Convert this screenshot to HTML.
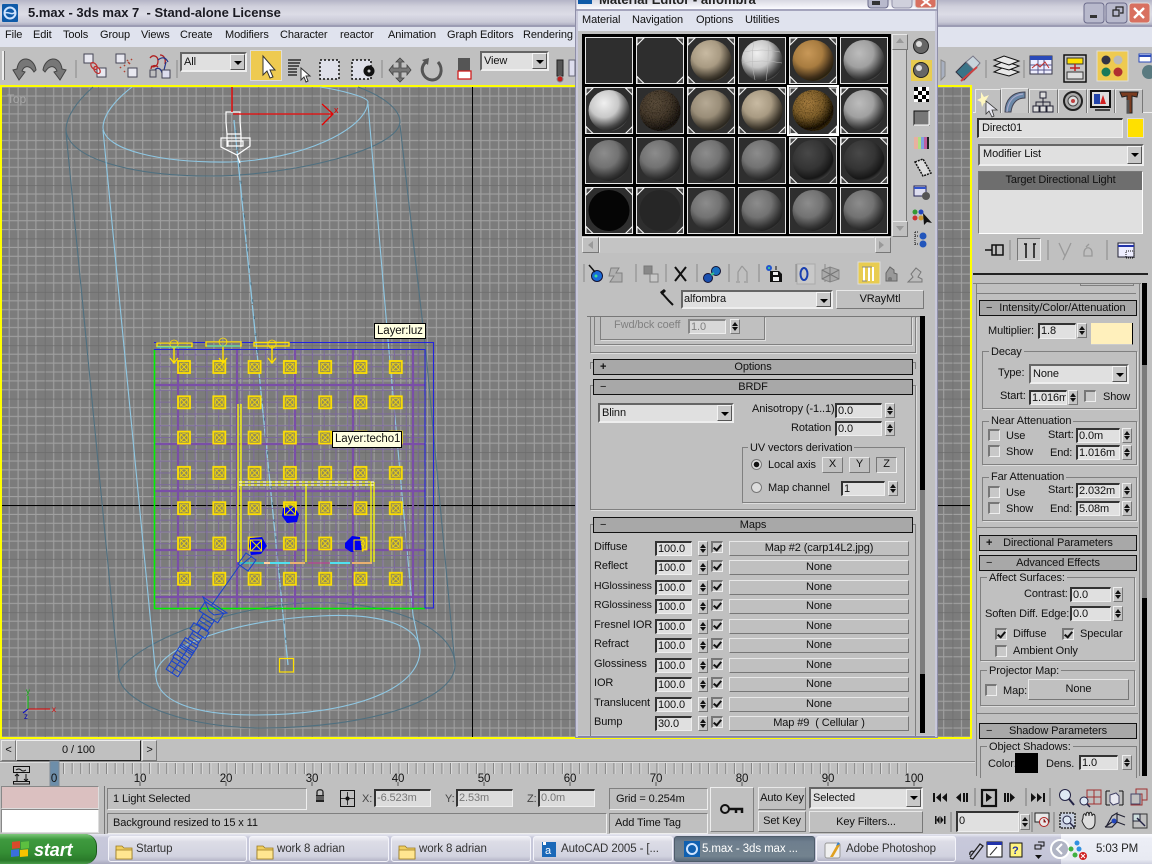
<!DOCTYPE html>
<html><head><meta charset="utf-8"><title>5.max - 3ds max 7</title>
<style>
html,body{margin:0;padding:0;width:1152px;height:864px;overflow:hidden;background:#c0c0c0}
body{position:relative;font:11px/14px "Liberation Sans",sans-serif;letter-spacing:-.1px;color:#111}
svg{position:absolute;left:0;top:0}
svg text{font-family:"Liberation Sans",sans-serif}
div,p,i,b{position:absolute;box-sizing:border-box}
p{margin:0;white-space:pre}
.f{background:#e0e0e0;border:1px solid;border-color:#333 #eee #eee #333;border-width:2px 1px 1px 2px;padding-left:1px;height:15px;line-height:12px;overflow:hidden;white-space:pre;color:#111}
.s{width:10px;height:15px;background:#c4c4c4;border:1px solid;border-color:#eee #777 #777 #eee}
.s:before,.s:after{content:"";position:absolute;left:1px;border-left:3px solid transparent;border-right:3px solid transparent}
.s:before{top:2px;border-bottom:4px solid #111}
.s:after{bottom:2px;border-top:4px solid #111}
.b{background:#c0c0c0;border:1px solid;border-color:#e8e8e8 #777 #777 #e8e8e8;text-align:center;white-space:pre;overflow:hidden}
.h{background:#a8a8a8;border:1px solid #111;height:15px;text-align:center;line-height:12px;white-space:pre}
.g{border:1px solid #808080;box-shadow:1px 1px 0 #ddd}
.gl{background:#c0c0c0;padding:0 2px}
.d{background:#e0e0e0;border:1px solid;border-color:#666 #eee #eee #666;border-width:2px 2px 2px 2px;padding-left:2px;white-space:pre;line-height:16px}
.d i{right:0;top:0;bottom:0;width:15px;background:#c8c8c8;border:1px solid;border-color:#f4f4f4 #555 #555 #f4f4f4}
.d i:after{content:"";position:absolute;left:3px;top:6px;border-left:4px solid transparent;border-right:4px solid transparent;border-top:4px solid #000}
.c{width:12px;height:12px;background:#c8c8c8;border:1px solid;border-color:#777 #eee #eee #777;border-width:2px 1px 1px 2px}
.k:after{content:"";position:absolute;left:2px;top:0;width:3px;height:6px;border:solid #111;border-width:0 2px 2px 0;transform:rotate(40deg)}
.tb{top:836px;height:26px;border-radius:3px;background:linear-gradient(#f0f0f6,#dcdce6 20%,#d2d3e0 80%,#b4b5c8);border:1px solid #f4f4fa;line-height:24px;padding-left:27px;white-space:pre;color:#333;overflow:hidden;font-size:11.5px}
</style></head><body>

<!-- viewport -->
<svg width="1152" height="864" viewBox="0 0 1152 864">
<defs>
<pattern id="gr" patternUnits="userSpaceOnUse" x="472" y="505.5" width="53.4" height="53.4">
<rect width="53.4" height="53.4" fill="#7c7c7c"/>
<g stroke="#a0a0a0" stroke-width="1.1">
<path d="M8.9 0V53.4M17.8 0V53.4M26.7 0V53.4M35.6 0V53.4M44.5 0V53.4M0 8.9H53.4M0 17.8H53.4M0 26.7H53.4M0 35.6H53.4M0 44.5H53.4"/></g>
<path d="M0 0V53.4M0 0H53.4" stroke="#6c6c6c" stroke-width="1.4"/>
</pattern>
<pattern id="pg" patternUnits="userSpaceOnUse" x="155" y="349" width="11.73" height="11.8">
<path d="M5 0V11.8M0 6H11.73" stroke="#7c68a0" stroke-width=".9"/>
</pattern>
<pattern id="ys" patternUnits="userSpaceOnUse" x="177" y="360" width="35.3" height="35.3">
<rect x="1" y="1" width="12" height="12" fill="#8f8a5a" stroke="#ffe000" stroke-width="1.8"/>
<circle cx="7" cy="7" r="4" fill="none" stroke="#ffe000" stroke-width=".8"/>
<path d="M3 3L11 11M11 3L3 11" stroke="#ffe000" stroke-width=".8"/>
</pattern>
</defs>
<rect x="0" y="85" width="972" height="654" fill="#ffff00"/>
<rect x="2" y="87" width="968" height="650" fill="url(#gr)"/>
<path d="M472.5 87V737M2 505.5H970" stroke="#000" stroke-width="1"/>
<text x="7" y="103" font-size="12" fill="#a8a8a8">Top</text>

<g fill="none" stroke-width="1.1">
<g stroke="#4f7080">
<path d="M93 87C75 103 66 118 66 130C68 158 130 176 210 176C290 176 398 150 400 122C400 108 380 95 358 87"/>
<path d="M66 132L119 678M400 125L426 353L455 665"/>
<path d="M119 678C112 660 190 615 290 604C380 596 455 625 455 665C455 700 370 728 262 728C190 728 125 705 119 678Z"/>
</g>
<g stroke="#8fc8e4">
<path d="M132 87C115 100 103 115 103 128C105 150 160 163 230 162C300 160 366 130 368 102C368 97 340 90 320 87"/>
<path d="M103 130L156 677M368 104L388 340L413 615L420 650"/>
<path d="M156 677C152 650 230 620 320 616C390 612 420 630 420 650C420 690 350 715 255 715C190 715 158 700 156 677Z"/>
<path d="M234 120L288 665" stroke-dasharray="30 1" stroke-width="1.3"/>
<path d="M236 130L286 640" stroke="#4f7080" stroke-dasharray="3 14"/>
</g>
</g>

<!-- interior -->
<rect x="155" y="349" width="270" height="259" fill="url(#pg)"/>
<path d="M155 385H425M155 444H425M155 491H425M155 550H425M155 597H425M178 349V608M237 349V608M295 349V608M353 349V608M413 349V608" stroke="#7a4ea8" stroke-width="2.2"/>
<path d="M154.5 349V608.5H425" fill="none" stroke="#00f000" stroke-width="1.6"/>
<path d="M154 342.5H433.5V608H425V349.5H154" fill="none" stroke="#2222e0" stroke-width="1.1"/>
<rect x="177" y="360" width="247.1" height="247.1" fill="url(#ys)"/>
<g fill="none" stroke="#ffe000" stroke-width="1.4">
<rect x="157" y="343" width="35" height="3.5"/><rect x="206" y="342" width="35" height="4"/><rect x="254" y="342.5" width="35" height="3.5"/>
<path d="M174 346V362M170 358L174 363L178 358M223 346V362M219 358L223 363L227 358M272 346V362M268 358L272 363L276 358"/>
<circle cx="174" cy="344" r="4" stroke-width=".8"/><circle cx="223" cy="342" r="4" stroke-width=".8"/><circle cx="272" cy="344" r="4" stroke-width=".8"/>
</g>
<g fill="none" stroke="#ffff00" stroke-width="1.3">
<path d="M238 404V562M241 404V562M239 482H374M239 485H374M371 482V562M374 482V562M306 484V562"/>
</g>
<path d="M239 482H374M239 485H374" fill="none" stroke="#fff" stroke-width="1" stroke-dasharray="3 3"/>
<path d="M157 347H191M207 346H240" stroke="#2ce0e0" stroke-width="1"/>
<path d="M240 563H264" stroke="#30d0d0" stroke-width="1.5"/><path d="M264 563H283" stroke="#ffd0a0" stroke-width="2"/><path d="M270 563H290" stroke="#50e0f0" stroke-width="2"/><path d="M290 563H305" stroke="#e8b070" stroke-width="2"/><path d="M308 563H330" stroke="#cc3399" stroke-width="1"/><path d="M330 563H350" stroke="#50e0f0" stroke-width="2"/><path d="M352 563H372" stroke="#e8b070" stroke-width="2"/>
<g fill="#0000f0">
<path d="M283 508L293 506L299 514L297 522L287 523L282 516Z"/>
<path d="M250 538L262 537L267 546L261 554L251 555L249 546Z"/>
<path d="M345 543L352 536L360 537L362 552L351 552L345 548Z"/>
</g>
<g fill="none" stroke="#ffe000" stroke-width="1"><rect x="284.500" y="504" width="11" height="11"/><path d="M285 504L296 515M296 504L285 515" stroke="#e0e000"/><rect x="250.500" y="540" width="11" height="11"/><path d="M251 540L262 551M262 540L251 551" stroke="#e0e000"/><rect x="354" y="540" width="9" height="11"/></g>

<!-- blue light -->
<g fill="none" stroke="#1540d0" stroke-width="1">
<g transform="translate(172,673) rotate(-57)">
<rect x="0" y="-7" width="14" height="14"/><rect x="14" y="-8" width="14" height="15"/><rect x="28" y="-8" width="9" height="15"/><path d="M5 -7V7M10 -7V7M18 -8V7M22 -8V7M26 -8V7M30 -8V7M34 -8V7M14 0H37M0 0H14"/>
<rect x="37" y="-5" width="10" height="11"/><rect x="47" y="-9" width="7" height="18"/><path d="M40 -5V6M44 -5V6M47 0H54"/>
<rect x="55" y="-6" width="12" height="13"/><path d="M59 -6V7M63 -6V7M67 -11L78 -11L78 11L67 11Z"/>
</g>
<path d="M203 597L227 613L214 615L209 611Z"/><path d="M211 606L240 565M246 553L256 560L248 571L238 564Z"/><path d="M240 566L252 556"/>
</g>
<rect x="279.500" y="658.500" width="14" height="13.500" fill="none" stroke="#ffe000" stroke-width="1.2"/>

<!-- white light + gizmo -->
<g fill="none" stroke="#fff" stroke-width="1.2">
<path d="M226 112H240V121L241 134H227L226 122ZM227 134L227 147M241 134V147M221 138H250V146L237 155L221 147ZM228 141H243V146H228ZM237 155L240 163"/>
</g>
<path d="M232 87V112" stroke="#e00000" stroke-width="1.4"/>
<path d="M233 114H332M322 104L333 114L322 125" fill="none" stroke="#e60000" stroke-width="1.3"/>
<text x="334" y="113" font-size="9" fill="#e00000">x</text>

<!-- axis -->
<path d="M28 709H50" stroke="#e00000" stroke-width="1"/><path d="M28 709V696" stroke="#00c000" stroke-width="1"/>
<path d="M28 709L23 713" stroke="#0000d0" stroke-width="1"/>
<text x="52" y="712" font-size="8" fill="#d00">x</text><text x="26" y="694" font-size="8" fill="#0a0">y</text><text x="24" y="719" font-size="8" fill="#00a">z</text>
</svg>

<div style="left:374px;top:323px;width:52px;height:16px;background:#ffffe1;border:1px solid #000;line-height:14px;padding-left:2px;font-size:11.5px">Layer:luz</div>
<div style="left:332px;top:431px;width:70px;height:17px;background:#ffffe1;border:1px solid #000;line-height:15px;padding-left:2px;font-size:11.5px">Layer:techo1</div>

<!-- title / menu / toolbar -->
<div style="left:0;top:0;width:1152px;height:26px;background:linear-gradient(#b4b4c6 0,#d0d0dc 25%,#dcdce6 55%,#c8c8d6 85%,#a8a8bc 100%)"></div>
<div style="left:0;top:25px;width:1152px;height:2px;background:#9c9cb4"></div>
<div style="left:0;top:27px;width:1152px;height:20px;background:#e0e3ee"></div>
<div style="left:0;top:47px;width:1152px;height:38px;background:#c0c0c0"></div>
<p style="left:28px;top:6px;font-weight:bold;font-size:13px;letter-spacing:0;color:#1a1a22">5.max - 3ds max 7  - Stand-alone License</p>
<p style="left:5px;top:28px">File</p><p style="left:33px;top:28px">Edit</p><p style="left:63px;top:28px">Tools</p><p style="left:100px;top:28px">Group</p><p style="left:141px;top:28px">Views</p><p style="left:180px;top:28px">Create</p><p style="left:225px;top:28px">Modifiers</p><p style="left:280px;top:28px">Character</p><p style="left:340px;top:28px">reactor</p><p style="left:388px;top:28px">Animation</p><p style="left:447px;top:28px">Graph Editors</p><p style="left:523px;top:28px">Rendering</p>
<div class="d" style="left:180px;top:52px;width:67px;height:20px">All<i></i></div>
<div class="d" style="left:480px;top:51px;width:69px;height:20px">View<i></i></div>

<!-- right panel -->
<div style="left:972px;top:85px;width:180px;height:655px;background:#c0c0c0"></div>
<div style="left:973px;top:112px;width:179px;height:1px;background:#eee"></div>
<div class="b" style="left:975px;top:89px;width:26px;height:24px;border-bottom:0"></div><div class="b" style="left:1001px;top:88px;width:28px;height:25px;border-bottom:0;background:#c8c8c8"></div><div class="b" style="left:1029px;top:89px;width:29px;height:24px;border-bottom:0"></div><div class="b" style="left:1058px;top:89px;width:29px;height:24px;border-bottom:0"></div><div class="b" style="left:1087px;top:89px;width:28px;height:24px;border-bottom:0"></div><div class="b" style="left:1115px;top:89px;width:28px;height:24px;border-bottom:0"></div>
<div class="f" style="left:977px;top:118px;width:146px;height:20px;line-height:16px;padding-left:3px">Direct01</div>
<div style="left:1127px;top:118px;width:17px;height:20px;background:#ffe000;border:1px solid #ddd"></div>
<div class="d" style="left:978px;top:144px;width:166px;height:22px;padding-left:3px">Modifier List<i></i></div>
<div style="left:978px;top:171px;width:165px;height:63px;background:#e0e0e0;border:1px solid #888;border-color:#777 #fff #fff #777"></div>
<div style="left:979px;top:172px;width:163px;height:18px;background:#6e6e6e;text-align:center;line-height:17px;color:#111">Target Directional Light</div>
<div class="b" style="left:1017px;top:238px;width:24px;height:23px;background:#c8c8c8;border-color:#777 #eee #eee #777"></div>
<div style="left:973px;top:273px;width:175px;height:2px;background:#222"></div>
<div style="left:973px;top:283px;width:168px;height:1px;background:#808080"></div>
<div style="left:1142px;top:283px;width:5px;height:493px;background:#000"></div>
<div style="left:1142px;top:365px;width:5px;height:233px;background:#7c7c7c"></div>
<div style="left:976px;top:283px;width:1px;height:493px;background:#808080"></div>
<div style="left:1139px;top:283px;width:1px;height:493px;background:#808080"></div>
<div style="left:976px;top:293px;width:160px;height:1px;background:#808080"></div>
<div style="left:1080px;top:283px;width:54px;height:3px;border:1px solid #808080;border-top:0"></div>

<div class="h" style="left:979px;top:300px;width:158px;height:16px;line-height:14px"><span style="position:absolute;left:6px;top:0">−</span>   Intensity/Color/Attenuation</div>
<p style="left:988px;top:324px">Multiplier:</p><div class="f" style="left:1038px;top:323px;width:38px;height:16px">1.8</div><div class="s" style="left:1077px;top:323px"></div>
<div style="left:1091px;top:323px;width:42px;height:22px;background:#fff0bc;border-right:1px solid #000;border-bottom:1px solid #ccc"></div>
<div class="g" style="left:982px;top:351px;width:155px;height:58px"></div><p class="gl" style="left:989px;top:345px">Decay</p>
<p style="left:998px;top:366px">Type:</p><div class="d" style="left:1029px;top:364px;width:100px;height:20px">None<i></i></div>
<p style="left:1000px;top:389px">Start:</p><div class="f" style="left:1029px;top:390px;width:38px">1.016m</div><div class="s" style="left:1068px;top:390px"></div><div class="c" style="left:1084px;top:390px"></div><p style="left:1103px;top:390px">Show</p>
<div class="g" style="left:982px;top:421px;width:155px;height:44px"></div><p class="gl" style="left:989px;top:414px">Near Attenuation</p>
<div class="c" style="left:988px;top:429px"></div><p style="left:1006px;top:429px">Use</p><div class="c" style="left:988px;top:445px"></div><p style="left:1006px;top:445px">Show</p>
<p style="left:1048px;top:428px">Start:</p><p style="left:1050px;top:446px">End:</p>
<div class="f" style="left:1076px;top:428px;width:44px">0.0m</div><div class="s" style="left:1122px;top:428px"></div><div class="f" style="left:1076px;top:445px;width:44px">1.016m</div><div class="s" style="left:1122px;top:445px"></div>
<div class="g" style="left:982px;top:477px;width:155px;height:44px"></div><p class="gl" style="left:989px;top:470px">Far Attenuation</p>
<div class="c" style="left:988px;top:486px"></div><p style="left:1006px;top:486px">Use</p><div class="c" style="left:988px;top:502px"></div><p style="left:1006px;top:502px">Show</p>
<p style="left:1048px;top:483px">Start:</p><p style="left:1050px;top:502px">End:</p>
<div class="f" style="left:1076px;top:483px;width:44px">2.032m</div><div class="s" style="left:1122px;top:483px"></div><div class="f" style="left:1076px;top:501px;width:44px">5.08m</div><div class="s" style="left:1122px;top:501px"></div>
<div style="left:977px;top:527px;width:161px;height:1px;background:#808080"></div>
<div class="h" style="left:979px;top:535px;width:158px;height:16px;line-height:14px"><span style="position:absolute;left:6px;top:0;font-weight:bold">+</span>Directional Parameters</div>
<div class="h" style="left:979px;top:555px;width:158px;height:16px;line-height:14px"><span style="position:absolute;left:6px;top:0">−</span>Advanced Effects</div>
<div class="g" style="left:980px;top:577px;width:155px;height:84px"></div><p class="gl" style="left:987px;top:571px">Affect Surfaces:</p>
<p style="left:1024px;top:587px">Contrast:</p><div class="f" style="left:1070px;top:587px;width:41px">0.0</div><div class="s" style="left:1113px;top:587px"></div>
<p style="left:985px;top:607px">Soften Diff. Edge:</p><div class="f" style="left:1070px;top:606px;width:41px">0.0</div><div class="s" style="left:1113px;top:606px"></div>
<div class="c k" style="left:995px;top:628px"></div><p style="left:1013px;top:627px">Diffuse</p><div class="c k" style="left:1062px;top:628px"></div><p style="left:1080px;top:627px">Specular</p>
<div class="c" style="left:995px;top:645px"></div><p style="left:1013px;top:644px">Ambient Only</p>
<div class="g" style="left:980px;top:670px;width:155px;height:36px"></div><p class="gl" style="left:987px;top:664px">Projector Map:</p>
<div class="c" style="left:985px;top:684px"></div><p style="left:1003px;top:684px">Map:</p><div class="b" style="left:1028px;top:679px;width:101px;height:21px;line-height:19px">None</div>
<div style="left:977px;top:713px;width:161px;height:1px;background:#808080"></div>
<div class="h" style="left:979px;top:723px;width:158px;height:16px;line-height:14px"><span style="position:absolute;left:6px;top:0">−</span>Shadow Parameters</div>
<div class="g" style="left:980px;top:746px;width:157px;height:32px;border-bottom:0;box-shadow:none"></div><p class="gl" style="left:987px;top:740px">Object Shadows:</p>
<p style="left:988px;top:757px">Color:</p><div style="left:1015px;top:753px;width:23px;height:20px;background:#000"></div><p style="left:1046px;top:757px">Dens.</p><div class="f" style="left:1079px;top:755px;width:39px">1.0</div><div class="s" style="left:1122px;top:755px"></div>

<!-- lower panels -->
<div style="left:0;top:739px;width:972px;height:95px;background:#c0c0c0"></div>
<div style="left:972px;top:778px;width:180px;height:56px;background:#c0c0c0"></div>
<div class="b" style="left:1px;top:740px;width:15px;height:21px;line-height:19px">&lt;</div>
<div style="left:16px;top:740px;width:125px;height:21px;background:#c0c0c0;border:1px solid;border-color:#eee #222 #222 #eee;text-align:center;line-height:19px">0 / 100</div>
<div class="b" style="left:142px;top:740px;width:15px;height:21px;line-height:19px">&gt;</div>
<div style="left:0;top:761px;width:975px;height:1px;background:#888"></div><div style="left:0;top:762px;width:975px;height:1px;background:#ddd"></div>
<svg width="1152" height="864" viewBox="0 0 1152 864" style="pointer-events:none">
<defs><pattern id="tk" patternUnits="userSpaceOnUse" x="54.500" y="762" width="8.6" height="12"><path d="M.5 1V12" stroke="#7f7f7f"/><path d="M1.5 1V12" stroke="#e0e0e0"/></pattern></defs>
<rect x="54.500" y="763" width="860" height="11" fill="url(#tk)"/>
<rect x="50" y="761" width="9" height="25" fill="#6d8eaa" stroke="#7f8a95"/>
<path d="M140 782v4M226 782v4M312 782v4M398 782v4M484 782v4M570 782v4M656 782v4M742 782v4M828 782v4M914 782v4" stroke="#555"/>
<g font-size="11.5" fill="#111" text-anchor="middle"><text x="54" y="782">0</text><text x="140" y="782">10</text><text x="226" y="782">20</text><text x="312" y="782">30</text><text x="398" y="782">40</text><text x="484" y="782">50</text><text x="570" y="782">60</text><text x="656" y="782">70</text><text x="742" y="782">80</text><text x="828" y="782">90</text><text x="914" y="782">100</text></g>
<g fill="none" stroke="#111"><rect x="13.500" y="766.500" width="16" height="6"/><path d="M16 770q3-2 5 0t5 0"/><path d="M17 774v7M26 774v7M15 776l2-2 2 2M24 779l2 2 2-2"/><rect x="13.500" y="781.500" width="16" height="2.500"/></g>
</svg>
<div style="left:1px;top:786px;width:98px;height:23px;background:#dbc0c0;border:1px solid;border-color:#888 #ddd #ddd #888"></div>
<div style="left:1px;top:809px;width:98px;height:24px;background:#fff;border:1px solid;border-color:#888 #ddd #ddd #888"></div>
<div style="left:104px;top:786px;width:1px;height:48px;background:#777"></div>
<div class="b" style="left:107px;top:788px;width:200px;height:22px;border-color:#808080 #eee #eee #808080;text-align:left;padding-left:5px;line-height:20px">1 Light Selected</div>
<div class="b" style="left:107px;top:813px;width:500px;height:21px;border-color:#808080 #eee #eee #808080;text-align:left;padding-left:5px;line-height:19px">Background resized to 15 x 11</div>
<div class="b" style="left:340px;top:790px;width:15px;height:17px;border:1px solid #111"></div>
<p style="left:362px;top:792px;color:#444">X:</p><div class="f" style="left:374px;top:789px;width:57px;height:18px;background:#dcdcdc;color:#777;line-height:14px">-6.523m</div>
<p style="left:445px;top:792px;color:#444">Y:</p><div class="f" style="left:456px;top:789px;width:57px;height:18px;background:#dcdcdc;color:#777;line-height:14px">2.53m</div>
<p style="left:527px;top:792px;color:#444">Z:</p><div class="f" style="left:538px;top:789px;width:57px;height:18px;background:#dcdcdc;color:#777;line-height:14px">0.0m</div>
<div class="b" style="left:609px;top:788px;width:99px;height:22px;border-color:#808080 #eee #eee #808080;text-align:left;padding-left:6px;line-height:20px">Grid = 0.254m</div>
<div class="b" style="left:609px;top:813px;width:99px;height:21px;border-color:#808080 #eee #eee #808080;text-align:left;padding-left:5px;line-height:19px">Add Time Tag</div>
<div class="b" style="left:710px;top:787px;width:44px;height:45px;border-color:#eee #808080 #808080 #eee"></div>
<div class="b" style="left:758px;top:787px;width:48px;height:23px;line-height:21px">Auto Key</div>
<div class="b" style="left:758px;top:811px;width:48px;height:21px;line-height:19px">Set Key</div>
<div class="d" style="left:809px;top:787px;width:114px;height:22px;padding-left:2px;line-height:18px">Selected<i></i></div>
<div class="b" style="left:809px;top:811px;width:114px;height:22px;line-height:20px">Key Filters...</div>
<div class="f" style="left:956px;top:811px;width:63px;height:21px;line-height:17px;border-color:#333 #eee #eee #333">0</div><div class="s" style="left:1020px;top:814px;height:16px"></div>

<!-- taskbar -->
<div style="left:0;top:834px;width:1152px;height:30px;background:linear-gradient(#e8e9f2,#c8c9db 12%,#c4c5d8 85%,#a8a9bd)"></div>
<div style="left:1061px;top:834px;width:91px;height:30px;background:linear-gradient(#fbfbff,#eceef6 15%,#e8eaf2 85%,#d0d2e0)"></div>
<div style="left:0;top:834px;width:97px;height:30px;background:linear-gradient(#7ec87a,#3f9a3f 18%,#358f35 60%,#2a7a2a 88%,#4a9c4a);border-radius:0 12px 12px 0;border-right:1px solid #1a5a1a"></div>
<p style="left:34px;top:840px;font:italic bold 18px/20px 'Liberation Sans',sans-serif;color:#fff">start</p>
<div class="tb" style="left:108px;width:139px">Startup</div>
<div class="tb" style="left:249px;width:140px">work 8 adrian</div>
<div class="tb" style="left:391px;width:140px">work 8 adrian</div>
<div class="tb" style="left:533px;width:140px">AutoCAD 2005 - [...</div>
<div class="tb" style="left:674px;width:141px;background:linear-gradient(#5c6c7c,#6e7e8e 20%,#73838f 80%,#5c6c7c);color:#fff;border-color:#4e5c6a">5.max - 3ds max ...</div>
<div class="tb" style="left:816px;width:140px;padding-left:29px">Adobe Photoshop</div>
<p style="left:1096px;top:842px;color:#222;font-size:11.5px">5:03 PM</p>

<!-- material editor -->
<div style="left:575px;top:-2px;width:363px;height:740px;background:#c0c0c0;border:1px solid #8f8fa8;box-shadow:inset 0 0 0 2px #c8c8da"></div>
<div style="left:577px;top:0;width:359px;height:9px;background:linear-gradient(#d8d8e2,#fbfbff)"></div>
<div style="left:576px;top:9px;width:361px;height:2px;background:#a4a4bc"></div>
<div style="left:578px;top:11px;width:357px;height:20px;background:#e0e3ee"></div>
<div style="left:578px;top:736px;width:357px;height:1px;background:#8484a0"></div>
<p style="left:599px;top:-7px;font-weight:bold;font-size:13px;letter-spacing:0;color:#222">Material Editor - alfombra</p>
<p style="left:582px;top:13px">Material</p><p style="left:632px;top:13px">Navigation</p><p style="left:696px;top:13px">Options</p><p style="left:745px;top:13px">Utilities</p>
<div style="left:582px;top:34px;width:309px;height:202px;background:#000"></div>
<div class="b" style="left:892px;top:34px;width:15px;height:203px;background:#c8c8c8"></div>
<div class="b" style="left:892px;top:34px;width:16px;height:16px"></div><div class="b" style="left:892px;top:221px;width:16px;height:16px"></div>
<div class="b" style="left:582px;top:237px;width:309px;height:16px;background:#c8c8c8"></div>
<div class="b" style="left:582px;top:237px;width:17px;height:16px"></div><div class="b" style="left:875px;top:237px;width:16px;height:16px"></div>
<div class="b" style="top:237px;height:16px;left:599px;width:276px;background:#c4c4c4;border-color:#eee #c4c4c4 #c4c4c4 #eee"></div>
<div class="d" style="left:681px;top:290px;width:152px;height:19px;padding-left:1px;line-height:15px">alfombra<i></i></div>
<div class="b" style="left:836px;top:290px;width:88px;height:19px;line-height:17px">VRayMtl</div>
<div style="left:587px;top:316px;width:333px;height:1px;background:#777"></div>
<div style="left:920px;top:316px;width:5px;height:417px;background:#000"></div><div style="left:920px;top:490px;width:5px;height:184px;background:#7c7c7c"></div>
<div class="g" style="left:590px;top:317px;width:326px;height:36px;border-top:0"></div>
<div class="g" style="left:594px;top:317px;width:318px;height:28px;border-top:0"></div>
<div class="g" style="left:600px;top:317px;width:165px;height:23px;border-top:0"></div>
<p style="left:614px;top:318px;color:#808080">Fwd/bck coeff</p>
<div class="f" style="left:688px;top:319px;width:38px;background:#d8d8d8;color:#808080;border-color:#888 #eee #eee #888">1.0</div><div class="s" style="left:730px;top:319px"></div>
<div class="g" style="left:590px;top:362px;width:326px;height:7px;border-bottom:0;box-shadow:none"></div>
<div class="h" style="left:593px;top:359px;width:320px;height:16px;line-height:14px"><span style="position:absolute;left:6px;top:0;font-weight:bold">+</span>Options</div>
<div class="g" style="left:590px;top:385px;width:326px;height:125px"></div>
<div class="h" style="left:593px;top:379px;width:320px;height:16px;line-height:14px"><span style="position:absolute;left:6px;top:0">−</span>BRDF</div>
<div class="d" style="left:598px;top:403px;width:136px;height:20px;line-height:17px">Blinn<i></i></div>
<p style="left:752px;top:402px">Anisotropy (-1..1)</p><div class="f" style="left:835px;top:403px;width:47px">0.0</div><div class="s" style="left:885px;top:403px"></div>
<p style="left:791px;top:421px">Rotation</p><div class="f" style="left:835px;top:421px;width:47px">0.0</div><div class="s" style="left:885px;top:421px"></div>
<div class="g" style="left:742px;top:447px;width:163px;height:56px"></div><p class="gl" style="left:748px;top:441px">UV vectors derivation</p>
<div style="left:751px;top:459px;width:11px;height:11px;border-radius:50%;background:radial-gradient(#111 0 2.500px,#ddd 3px);border:1px solid #777"></div><p style="left:768px;top:458px">Local axis</p>
<div class="b" style="left:822px;top:457px;width:21px;height:16px;line-height:13px">X</div><div class="b" style="left:849px;top:457px;width:21px;height:16px;line-height:13px">Y</div><div class="b" style="left:876px;top:457px;width:21px;height:16px;line-height:13px;border-color:#777 #eee #eee #777">Z</div>
<div style="left:751px;top:482px;width:11px;height:11px;border-radius:50%;background:#ddd;border:1px solid #777"></div><p style="left:768px;top:481px">Map channel</p>
<div class="f" style="left:841px;top:481px;width:44px">1</div><div class="s" style="left:888px;top:481px"></div>
<div class="g" style="left:590px;top:524px;width:326px;height:212px;border-bottom:0;box-shadow:none"></div>
<div class="h" style="left:593px;top:517px;width:320px;height:16px;line-height:14px"><span style="position:absolute;left:6px;top:0">−</span>Maps</div>

<p style="left:594px;top:540px">Diffuse</p><div class="f" style="left:655px;top:541px;width:37px">100.0</div><div class="s" style="left:698px;top:541px"></div><div class="c k" style="left:711px;top:541px"></div><div class="b" style="left:729px;top:541px;width:180px;height:15px;line-height:13px">Map #2 (carp14L2.jpg)</div>
<p style="left:594px;top:559px">Reflect</p><div class="f" style="left:655px;top:560px;width:37px">100.0</div><div class="s" style="left:698px;top:560px"></div><div class="c k" style="left:711px;top:560px"></div><div class="b" style="left:729px;top:560px;width:180px;height:15px;line-height:13px">None</div>
<p style="left:594px;top:579px;font-size:10.500px">HGlossiness</p><div class="f" style="left:655px;top:580px;width:37px">100.0</div><div class="s" style="left:698px;top:580px"></div><div class="c k" style="left:711px;top:580px"></div><div class="b" style="left:729px;top:580px;width:180px;height:15px;line-height:13px">None</div>
<p style="left:594px;top:598px;font-size:10.500px">RGlossiness</p><div class="f" style="left:655px;top:599px;width:37px">100.0</div><div class="s" style="left:698px;top:599px"></div><div class="c k" style="left:711px;top:599px"></div><div class="b" style="left:729px;top:599px;width:180px;height:15px;line-height:13px">None</div>
<p style="left:594px;top:618px">Fresnel IOR</p><div class="f" style="left:655px;top:619px;width:37px">100.0</div><div class="s" style="left:698px;top:619px"></div><div class="c k" style="left:711px;top:619px"></div><div class="b" style="left:729px;top:619px;width:180px;height:15px;line-height:13px">None</div>
<p style="left:594px;top:637px">Refract</p><div class="f" style="left:655px;top:638px;width:37px">100.0</div><div class="s" style="left:698px;top:638px"></div><div class="c k" style="left:711px;top:638px"></div><div class="b" style="left:729px;top:638px;width:180px;height:15px;line-height:13px">None</div>
<p style="left:594px;top:657px">Glossiness</p><div class="f" style="left:655px;top:658px;width:37px">100.0</div><div class="s" style="left:698px;top:658px"></div><div class="c k" style="left:711px;top:658px"></div><div class="b" style="left:729px;top:658px;width:180px;height:15px;line-height:13px">None</div>
<p style="left:594px;top:676px">IOR</p><div class="f" style="left:655px;top:677px;width:37px">100.0</div><div class="s" style="left:698px;top:677px"></div><div class="c k" style="left:711px;top:677px"></div><div class="b" style="left:729px;top:677px;width:180px;height:15px;line-height:13px">None</div>
<p style="left:594px;top:696px">Translucent</p><div class="f" style="left:655px;top:697px;width:37px">100.0</div><div class="s" style="left:698px;top:697px"></div><div class="c k" style="left:711px;top:697px"></div><div class="b" style="left:729px;top:697px;width:180px;height:15px;line-height:13px">None</div>
<p style="left:594px;top:715px">Bump</p><div class="f" style="left:655px;top:716px;width:37px">30.0</div><div class="s" style="left:698px;top:716px"></div><div class="c k" style="left:711px;top:716px"></div><div class="b" style="left:729px;top:716px;width:180px;height:15px;line-height:13px">Map #9  ( Cellular )</div>

<!-- icons & spheres overlay -->
<svg width="1152" height="864" viewBox="0 0 1152 864">
<defs>
<radialGradient id="sh" cx=".38" cy=".32" r=".78" fx=".38" fy=".32"><stop offset="0" stop-color="#8c8c8c"/><stop offset=".45" stop-color="#727272"/><stop offset=".76" stop-color="#343434"/><stop offset=".88" stop-color="#222"/><stop offset="1" stop-color="#787878"/></radialGradient>
<radialGradient id="gl" cx=".38" cy=".32" r=".78" fx=".38" fy=".32"><stop offset="0" stop-color="#bcbcbc"/><stop offset=".45" stop-color="#a0a0a0"/><stop offset=".76" stop-color="#404040"/><stop offset=".88" stop-color="#262626"/><stop offset="1" stop-color="#b0b0b0"/></radialGradient>
<radialGradient id="wh" cx=".38" cy=".32" r=".78" fx=".38" fy=".32"><stop offset="0" stop-color="#f0f0f0"/><stop offset=".45" stop-color="#c8c8c8"/><stop offset=".76" stop-color="#484848"/><stop offset=".88" stop-color="#282828"/><stop offset="1" stop-color="#d8d8d8"/></radialGradient>
<radialGradient id="be" cx=".38" cy=".32" r=".78" fx=".38" fy=".32"><stop offset="0" stop-color="#c8baa2"/><stop offset=".45" stop-color="#a89a82"/><stop offset=".76" stop-color="#453e32"/><stop offset=".88" stop-color="#28241c"/><stop offset="1" stop-color="#b0a48c"/></radialGradient>
<radialGradient id="or" cx=".38" cy=".32" r=".78" fx=".38" fy=".32"><stop offset="0" stop-color="#c89858"/><stop offset=".45" stop-color="#a87c40"/><stop offset=".76" stop-color="#42301a"/><stop offset=".88" stop-color="#28200e"/><stop offset="1" stop-color="#b88c50"/></radialGradient>
<radialGradient id="br" cx=".38" cy=".32" r=".78" fx=".38" fy=".32"><stop offset="0" stop-color="#a87e40"/><stop offset=".45" stop-color="#80602c"/><stop offset=".8" stop-color="#1e1608"/><stop offset="1" stop-color="#4c3818"/></radialGradient>
<radialGradient id="dk" cx=".38" cy=".32" r=".78" fx=".38" fy=".32"><stop offset="0" stop-color="#5c4e3c"/><stop offset=".45" stop-color="#483c2e"/><stop offset=".85" stop-color="#1c1814"/><stop offset="1" stop-color="#302a22"/></radialGradient>
<radialGradient id="da" cx=".38" cy=".32" r=".78" fx=".38" fy=".32"><stop offset="0" stop-color="#484848"/><stop offset=".5" stop-color="#343434"/><stop offset=".8" stop-color="#161616"/><stop offset="1" stop-color="#5c5c5c"/></radialGradient>
<filter id="nz" x="0" y="0" width="1" height="1"><feTurbulence type="fractalNoise" baseFrequency=".9" numOctaves="2" result="t"/><feColorMatrix in="t" type="matrix" values="0 0 0 0 0 0 0 0 0 0 0 0 0 0 0 0 0 0 2.200 -1"/><feComposite in2="SourceAlpha" operator="in" result="m"/><feMerge><feMergeNode in="SourceGraphic"/><feMergeNode in="m"/></feMerge></filter>
<g id="S"><rect x=".5" y=".5" width="47" height="46" fill="#2e2e2e" stroke="#e4e4e4"/></g>
<g id="C" fill="#484848" stroke="#eee" stroke-width="1.1"><path d="M1 1H8L1 8ZM47.500 1H40.500L47.500 8ZM1 46.500H8L1 39.500ZM47.500 46.500H40.500L47.500 39.500Z"/></g>
</defs>
<g transform="translate(585,37)"><use href="#S"/></g>
<g transform="translate(636,37)"><use href="#S"/><use href="#C"/></g>
<g transform="translate(687,37)"><use href="#S"/><circle cx="24" cy="23.500" r="20.500" fill="url(#be)"/><use href="#C"/></g>
<g transform="translate(738,37)"><use href="#S"/><circle cx="24" cy="23.500" r="20.500" fill="url(#wh)"/><path d="M6 15Q24 11 42 15M4 26Q24 22 44 26M16 4Q12 24 17 43M30 3Q31 24 28 44" fill="none" stroke="#bbb" stroke-width=".5"/></g>
<g transform="translate(789,37)"><use href="#S"/><circle cx="24" cy="23.500" r="20.500" fill="url(#or)"/><use href="#C"/></g>
<g transform="translate(840,37)"><use href="#S"/><circle cx="24" cy="23.500" r="20.500" fill="url(#gl)"/></g>
<g transform="translate(585,87)"><use href="#S"/><circle cx="24" cy="23.500" r="20.500" fill="url(#wh)"/><use href="#C"/></g>
<g transform="translate(636,87)"><use href="#S"/><circle cx="24" cy="23.500" r="20.500" fill="url(#dk)" filter="url(#nz)"/></g>
<g transform="translate(687,87)"><use href="#S"/><circle cx="24" cy="23.500" r="20.500" fill="url(#be)" opacity=".88"/><use href="#C"/></g>
<g transform="translate(738,87)"><use href="#S"/><circle cx="24" cy="23.500" r="20.500" fill="url(#be)"/><use href="#C"/></g>
<g transform="translate(789,87)"><rect x="-1" y="-1" width="50" height="49" fill="#2e2e2e" stroke="#fff" stroke-width="2"/><circle cx="24" cy="23.500" r="20.500" fill="url(#br)" filter="url(#nz)"/><use href="#C"/></g>
<g transform="translate(840,87)"><use href="#S"/><circle cx="24" cy="23.500" r="20.500" fill="url(#gl)"/><use href="#C"/></g>
<g transform="translate(585,137)"><use href="#S"/><circle cx="24" cy="23.500" r="20.500" fill="url(#sh)"/></g>
<g transform="translate(636,137)"><use href="#S"/><circle cx="24" cy="23.500" r="20.500" fill="url(#sh)"/></g>
<g transform="translate(687,137)"><use href="#S"/><circle cx="24" cy="23.500" r="20.500" fill="url(#sh)"/></g>
<g transform="translate(738,137)"><use href="#S"/><circle cx="24" cy="23.500" r="20.500" fill="url(#sh)"/></g>
<g transform="translate(789,137)"><use href="#S"/><circle cx="24" cy="23.500" r="20.500" fill="url(#da)"/><use href="#C"/></g>
<g transform="translate(840,137)"><use href="#S"/><circle cx="24" cy="23.500" r="20.500" fill="url(#da)"/><use href="#C"/></g>
<g transform="translate(585,187)"><use href="#S"/><circle cx="24" cy="23.500" r="20.500" fill="#050505"/><use href="#C"/></g>
<g transform="translate(636,187)"><use href="#S"/><circle cx="24" cy="23.500" r="20.500" fill="#262626"/><use href="#C"/></g>
<g transform="translate(687,187)"><use href="#S"/><circle cx="24" cy="23.500" r="20.500" fill="url(#sh)"/></g>
<g transform="translate(738,187)"><use href="#S"/><circle cx="24" cy="23.500" r="20.500" fill="url(#sh)"/></g>
<g transform="translate(789,187)"><use href="#S"/><circle cx="24" cy="23.500" r="20.500" fill="url(#sh)"/></g>
<g transform="translate(840,187)"><use href="#S"/><circle cx="24" cy="23.500" r="20.500" fill="url(#sh)"/></g>
<path d="M900 38l-4 5h8zM900 231l-4-5h8z" fill="#999"/><path d="M588 245l5-4v8ZM884 245l-5-4v8Z" fill="#999"/>

<!-- mat right icons -->
<circle cx="921" cy="46" r="7.500" fill="#666" stroke="#222"/><circle cx="919" cy="44" r="3" fill="#ddd"/>
<rect x="911" y="60" width="21" height="21" fill="#e8cc50"/><circle cx="921" cy="70" r="7.500" fill="#666" stroke="#222"/><circle cx="919" cy="68" r="3" fill="#ddd"/>
<g fill="#000"><path d="M914 87h15v15h-15z" fill="#fff"/><path d="M914 87h4v4h-4zM922 87h4v4h-4zM918 91h4v4h-4zM926 91h3v4h-3zM914 95h4v4h-4zM922 95h4v4h-4zM918 99h4v3h-4zM926 99h3v3h-3z"/></g>
<rect x="914" y="111" width="15" height="14" fill="#777" stroke="#111"/><path d="M914 125h15M929 111v14" stroke="#fff"/>
<g><rect x="914" y="137" width="4" height="12" fill="#e8b0a0"/><rect x="918" y="137" width="3" height="12" fill="#b0e080"/><rect x="921" y="137" width="3" height="12" fill="#80a0e0"/><rect x="924" y="137" width="3" height="12" fill="#c060a0"/><rect x="927" y="137" width="2" height="12" fill="#222"/></g>
<path d="M915 162l8-3 8 14-8 3z" fill="#ddd" stroke="#111" stroke-width="1.500" stroke-dasharray="2 1"/>
<rect x="914" y="186" width="12" height="10" fill="#dde" stroke="#225"/><path d="M914 188h12" stroke="#3355cc" stroke-width="2"/><circle cx="926" cy="196" r="4" fill="#555"/>
<g><circle cx="915" cy="212" r="2.500" fill="#339933"/><circle cx="921" cy="212" r="2.500" fill="#2244bb"/><circle cx="915" cy="218" r="2.500" fill="#cc3333"/><circle cx="921" cy="218" r="2.500" fill="#cc9933"/><path d="M923 213l1 12 3-3 5 1z" fill="#111"/></g>
<circle cx="923" cy="236" r="3.500" fill="#2255bb"/><circle cx="923" cy="244" r="3.500" fill="#2255bb"/><path d="M915 232h4M915 232v14M915 236h4M915 244h4" stroke="#111" stroke-dasharray="1 1"/>

<!-- mat bottom toolbar -->
<g stroke="#888" stroke-width="1"><path d="M584 264v18M636 264v18M666 264v18M697 264v18M729 264v18M759 264v18M796 264v18M825 264v18"/></g>
<circle cx="597" cy="276" r="5.500" fill="#1a6ad8" stroke="#113"/><path d="M589 265l6 7" stroke="#111" stroke-width="1.500"/><circle cx="596" cy="276" r="1.500" fill="#40e090"/>
<path d="M611 268h8l-3 5h6v9h-12l4-6h-5z" fill="#b0b0b0" stroke="#808080"/>
<rect x="644" y="266" width="8" height="8" fill="#888" stroke="#777"/><rect x="650" y="274" width="8" height="8" fill="#c8c8c8" stroke="#808080"/>
<path d="M675 267L686 281M686 267L675 281" stroke="#111" stroke-width="2"/>
<circle cx="708" cy="278" r="4.500" fill="#1a50b0" stroke="#113"/><circle cx="716" cy="271" r="4.500" fill="#1a70c0" stroke="#113"/><path d="M711 275l3-2" stroke="#30c090" stroke-width="2"/>
<path d="M742 266l-4 6v9M742 266l5 6v9M736 282h4M744 282h4" fill="none" stroke="#999" stroke-width="1.200"/>
<circle cx="769" cy="268" r="3" fill="#2255cc"/><circle cx="769" cy="268" r="1" fill="#40e090"/><path d="M770 271h9l3 3v8h-12z" fill="#111"/><rect x="773" y="272" width="5" height="3" fill="#eee"/><rect x="773" y="277" width="6" height="4" fill="#eee"/><path d="M776 266v4" stroke="#111"/>
<rect x="797" y="264" width="18" height="20" fill="#c8c8c8" stroke="#aaa"/><ellipse cx="804" cy="274" rx="3.500" ry="6" fill="none" stroke="#1a3fb0" stroke-width="2"/>
<path d="M830 267l9 3v9l-9 3-8-3v-9z" fill="#aaa" stroke="#888"/><path d="M830 267v15M822 270l17 9M839 270l-17 9" stroke="#777"/>
<rect x="858" y="262" width="22" height="22" fill="#e8cc50" stroke="#ddd"/><path d="M864 267V281M869 267V281M873 267V281" stroke="#fff" stroke-width="2"/><path d="M862 267h10M862 281h5" stroke="#888"/>
<path d="M886 273l4-6 4 3v3l3 1v7h-11z" fill="#999" stroke="#666"/><circle cx="890" cy="279" r="2" fill="#777"/>
<path d="M908 282l5-5-2-3 5-6 5 4-3 5 4 2v3z" fill="#bbb" stroke="#777"/>
<!-- eyedropper -->
<path d="M661 292L669 301L673 305" stroke="#111" stroke-width="2" fill="none"/><path d="M660 292l4-3 2 2-4 4z" fill="#111"/>

<!-- main toolbar -->
<rect x="2" y="51" width="3" height="29" fill="#eee"/><rect x="4" y="51" width="1" height="29" fill="#777"/>
<path d="M13 70L19 80L25 72L22 71C24 66 29 64 34 72L36 70C34 57 19 54 17 69Z" fill="#777" stroke="#444"/>
<path d="M66 70L60 80L54 72L57 71C55 66 50 64 45 72L43 70C45 57 60 54 62 69Z" fill="#777" stroke="#444"/>
<path d="M76 60v18" stroke="#888"/>
<rect x="84" y="54" width="9" height="9" fill="#e8e8f0" stroke="#445"/><rect x="97" y="68" width="9" height="9" fill="#e8e8f0" stroke="#445"/><ellipse cx="94" cy="66" rx="2.500" ry="4" fill="none" stroke="#c03030" stroke-width="1.300" transform="rotate(-40 94 66)"/><ellipse cx="97" cy="70" rx="2.500" ry="4" fill="none" stroke="#c03030" stroke-width="1.300" transform="rotate(-40 97 70)"/>
<rect x="116" y="54" width="9" height="9" fill="#e8e8f0" stroke="#445"/><rect x="128" y="68" width="9" height="9" fill="#e8e8f0" stroke="#445"/><path d="M127 60l1 1M131 59l1 1M120 67l1 1M124 71l1 1M128 62l2 2M124 65l1 1" stroke="#b04030" stroke-width="1.500"/>
<path d="M150 58c3-4 8-2 8 3s-4 7-7 5M160 55c4 0 6 4 5 9M151 69c0-3 4-5 7-2" fill="none" stroke="#b02020" stroke-width="1.300"/><path d="M158 60c5-4 8-2 10 2M155 70c2-3 6-2 7 3M166 62l-2 8" fill="none" stroke="#223388" stroke-width="1.200"/><rect x="162" y="70" width="8" height="8" fill="#dde" stroke="#445"/><rect x="150" y="70" width="6" height="7" fill="none" stroke="#445"/>
<path d="M177 60v18" stroke="#888"/>
<rect x="250.500" y="50.500" width="31" height="30" fill="#eeca50" stroke="#ddd"/>
<path d="M263 56V75L267 71L270 78L273 77L270 70H275Z" fill="#fff" stroke="#333"/>
<path d="M288 60h13M288 63h12M288 66h11M288 69h9M288 72h9M288 75h9" stroke="#111" stroke-width="1.200"/><path d="M301 68V80L304 77L306 82L308 81L306 76H310Z" fill="#fff" stroke="#333"/>
<rect x="320" y="60" width="19" height="19" fill="#dfe0ea" stroke="#111" stroke-width="1.500" stroke-dasharray="2 2"/>
<rect x="352" y="60" width="19" height="19" fill="#dfe0ea" stroke="#111" stroke-width="1.500" stroke-dasharray="2 2"/><circle cx="369" cy="71" r="5.500" fill="#111"/><circle cx="369" cy="71" r="1.500" fill="#ccc"/>
<path d="M382 60v18" stroke="#888"/>
<path d="M400 58l4 4h-3v6h6v-3l4 5-4 5v-3h-6v6h3l-4 4-4-4h3v-6h-6v3l-4-5 4-5v3h6v-6h-3z" fill="#777" stroke="#444" stroke-width=".8"/>
<path d="M426 62C419 67 422 79 432 80C441 80 444 69 438 62" fill="none" stroke="#555" stroke-width="3"/><path d="M422 60l7-2-1 7z" fill="#555"/>
<rect x="458" y="58" width="12" height="13" fill="#555"/><rect x="458" y="71" width="13" height="8" fill="#fff" stroke="#d02020" stroke-width="1.300"/>
<rect x="557" y="60" width="6" height="16" fill="#555" stroke="#222"/><circle cx="560" cy="79" r="3" fill="#c02020" stroke="#888"/>
<rect x="569" y="60" width="6" height="16" fill="#dde" stroke="#667"/>

<!-- right of editor toolbar -->
<path d="M941 60L945 62V76L941 80z" fill="#a8b0c0" stroke="#888"/>
<path d="M956 72L966 62L974 70L964 80Z" fill="#3a7488" stroke="#334"/><path d="M966 62L973 56L980 63L974 70Z" fill="#c8d4dc" stroke="#778"/><path d="M961 81L977 67" stroke="#d04040" stroke-width="2"/>
<path d="M986 60v18M1024 60v18M1084 60v18" stroke="#888"/>
<g fill="#e8e8e8" stroke="#111"><path d="M994 72l10-5 15 5-10 4z"/><path d="M994 66l10-5 15 5-10 4z"/><path d="M994 60l10-4 15 5-10 4z"/></g>
<rect x="1030" y="56" width="22" height="18" fill="#eef" stroke="#334"/><rect x="1030" y="56" width="22" height="4" fill="#2a4ab8"/><path d="M1030 65h22M1030 70h22M1038 60v14M1044 60v14" stroke="#558"/><path d="M1032 68l5-4 3 3 5-5 4 6" fill="none" stroke="#c03030"/>
<rect x="1064" y="55" width="22" height="27" fill="#c4c4c4" stroke="#111" stroke-width="1.500"/><rect x="1067" y="58" width="16" height="6" fill="#ffe000" stroke="#333"/><rect x="1067" y="72" width="16" height="7" fill="#ddd" stroke="#333"/><path d="M1075 64v7M1070 68h10" stroke="#c02020" stroke-width="1.500"/>
<rect x="1097" y="51" width="31" height="30" fill="#eeca50" stroke="#ddd"/><circle cx="1106" cy="60" r="4.500" fill="#334"/><circle cx="1118" cy="60" r="4.500" fill="#bbb"/><circle cx="1106" cy="72" r="4.500" fill="#1a7a5a"/><circle cx="1118" cy="72" r="4.500" fill="#b03030"/>
<rect x="1139" y="54" width="12" height="8" fill="#fff" stroke="#2a4ab8"/><path d="M1139 56h12" stroke="#2a4ab8" stroke-width="2"/><circle cx="1149" cy="72" r="7" fill="#5a7a80"/>

<!-- title icon + buttons -->
<rect x="2" y="4" width="16" height="18" fill="#0f5aa8" rx="1"/><circle cx="10" cy="13" r="5.500" fill="none" stroke="#cfe4ff" stroke-width="2"/><path d="M5 13c3-2 7 3 10-1" stroke="#cfe4ff" fill="none" stroke-width="1.500"/>
<rect x="1084" y="3" width="20" height="20" rx="3" fill="#b8b9cc" stroke="#6a6a8a"/><rect x="1090" y="15" width="7" height="3" fill="#333"/>
<rect x="1106" y="3" width="21" height="20" rx="3" fill="#b8b9cc" stroke="#6a6a8a"/><path d="M1113 10h6v6h-6zM1116 10v-3h7v6h-3" fill="none" stroke="#222" stroke-width="1.200"/>
<rect x="1129" y="3" width="21" height="20" rx="3" fill="#d87060" stroke="#ddd"/><path d="M1134 8l10 10M1144 8l-10 10" stroke="#fff" stroke-width="2.400"/>
<rect x="868" y="-12" width="20" height="20" rx="3" fill="#b8b9cc" stroke="#6a6a8a"/><rect x="872" y="1" width="8" height="4" fill="#333"/>
<rect x="892" y="-12" width="20" height="20" rx="3" fill="#cfd0dc" stroke="#9090a8"/><rect x="915" y="-12" width="21" height="20" rx="3" fill="#d87060" stroke="#ddd"/><path d="M921 -2l10 8M931 -2l-10 8" stroke="#fff" stroke-width="2"/>
<rect x="578" y="-10" width="14" height="14" fill="#0f5aa8"/>

<!-- right tabs -->
<path d="M981 92l3 5 5-2-3 5 3 4-5-1-2 4-1-5-4-2 4-2z" fill="#fff7c0"/><path d="M986 101V114L989 111L992 117L994 116L992 110H997Z" fill="#e8e8f0" stroke="#333" stroke-width=".8"/>
<path d="M1005 112c0-12 7-20 20-20v6c-8 0-13 5-14 14z" fill="#6a88a8" stroke="#445"/><path d="M1007 112c1-10 6-17 16-18" fill="none" stroke="#aac" stroke-width="1.200"/>
<g fill="none" stroke="#223"><rect x="1040" y="92" width="6" height="6" fill="#ddd"/><rect x="1033" y="106" width="6" height="6" fill="#ddd"/><rect x="1040" y="106" width="6" height="6" fill="#ddd"/><rect x="1047" y="106" width="6" height="6" fill="#ddd"/><path d="M1043 98V106M1036 106V102H1050V106"/></g>
<circle cx="1073" cy="101" r="9" fill="#aaa" stroke="#222" stroke-width="2"/><circle cx="1073" cy="101" r="5" fill="#ddd" stroke="#444"/><circle cx="1073" cy="101" r="2" fill="#c04040"/>
<rect x="1091" y="91" width="19" height="16" fill="#ddd" stroke="#111" stroke-width="2"/><rect x="1094" y="94" width="6" height="10" fill="#2244aa"/><path d="M1100 104l3-9 3 9z" fill="#d02020"/><path d="M1095 110h15" stroke="#444" stroke-width="2"/>
<path d="M1120 92h18l-1 5-5-1v17h-5V96l-5 1z" fill="#7a3c20" stroke="#222"/><path d="M1128 100v13" stroke="#555" stroke-width="3"/>

<!-- stack toolbar -->
<path d="M985 250h7M992 245h11v10h-11zM996 245v10" fill="none" stroke="#111" stroke-width="1.500"/>
<path d="M1010 240v20M1048 240v20M1107 240v20" stroke="#888"/>
<path d="M1027 244h-3M1033 244h3M1026 244v14M1034 244v14" fill="none" stroke="#111" stroke-width="1.500"/>
<path d="M1059 243l6 13 6-13M1065 256l-2 4" fill="none" stroke="#999" stroke-width="1.300"/>
<path d="M1084 253c0-7 8-7 8 0v3h-8zM1086 247l3-3" fill="none" stroke="#999" stroke-width="1.300"/>
<rect x="1118" y="243" width="16" height="14" fill="#eef" stroke="#223"/><path d="M1118 246h16" stroke="#2233aa" stroke-width="2"/><rect x="1126" y="251" width="8" height="7" fill="none" stroke="#111" stroke-dasharray="1 1"/>

<!-- status icons -->
<path d="M317 795v-3c0-3 6-3 6 0v3" fill="none" stroke="#222" stroke-width="1.300"/><rect x="316" y="795" width="8" height="7" fill="#222"/><path d="M316 797h8M316 799h8" stroke="#999"/>
<path d="M341 798.500h13M347.500 792v13" stroke="#333"/><circle cx="347.500" cy="798.500" r="2" fill="#111"/>
<!-- key -->
<circle cx="725" cy="809" r="4" fill="none" stroke="#111" stroke-width="2"/><path d="M729 809h13v4M736 809v4" stroke="#111" stroke-width="2.500" fill="none"/>
<!-- playback -->
<g fill="#111">
<path d="M933 793h2v9h-2zM941 793v9l-5-4.500zM947 793v9l-5-4.500z"/>
<path d="M961 793v9l-5-4.500zM963 793h2v9h-2zM966 793h2v9h-2z"/>
<path d="M1004 793h2v9h-2zM1007 793h2v9h-2zM1010 793v9l5-4.500z"/>
<path d="M1031 793v9l5-4.500zM1037 793v9l5-4.500zM1043 793h2v9h-2z"/>
<path d="M935 816h1.500v8h-1.500zM939.500 816v8l-3-4zM940.500 816v8l3-4zM944 816h1.500v8h-1.500z"/>
</g>
<rect x="982" y="790" width="14" height="16" fill="none" stroke="#111" stroke-width="2.200"/><path d="M986 793v9l6-4.500z" fill="#111"/>
<path d="M951 812v20M975 788v18M1026 788v18M1050 788v18M1032 812v20M1054 812v20" stroke="#777"/>
<circle cx="1065" cy="795" r="5.500" fill="#dde8f4" stroke="#224"/><path d="M1069 799l5 6" stroke="#224" stroke-width="2"/>
<path d="M1087 790h14v14h-14zM1094 790v14M1087 797h14" fill="none" stroke="#a03030"/><circle cx="1084" cy="801" r="4" fill="#dde8f4" stroke="#224"/><path d="M1087 804l3 3" stroke="#224" stroke-width="1.500"/>
<path d="M1106 791h4M1106 791v14M1106 805h4M1119 791h4M1123 791v14M1123 805h-4" stroke="#111" fill="none"/><path d="M1110 795l6-2 3 3v7l-6 2-3-3z" fill="#e8e8f0" stroke="#446"/>
<path d="M1131 794h11v11h-11zM1136 794v-5h11v11h-5" fill="none" stroke="#a03030"/><rect x="1131" y="794" width="9" height="10" fill="none" stroke="#446"/>
<rect x="1035" y="813" width="14" height="9" fill="#e8e8e8" stroke="#222"/><circle cx="1044" cy="822" r="4.500" fill="#e8e8e8" stroke="#b02020"/><path d="M1044 819v3h2" stroke="#b02020"/>
<rect x="1060" y="813" width="15" height="15" fill="#c8d0e0" stroke="#111" stroke-dasharray="2 1" stroke-width="1.300"/><circle cx="1067" cy="820" r="4" fill="#dde8f4" stroke="#224"/><path d="M1070 823l4 4" stroke="#224" stroke-width="1.500"/>
<path d="M1083 818c0-4 2-6 3-2 0-5 3-5 3 0 0-5 3-5 3 0 1-3 3-2 3 1v5c0 5-3 7-6 7s-5-3-7-8z" fill="#ddd" stroke="#222"/>
<path d="M1112 816l5-3v9l-5 5-6 0zM1117 822l8 3M1117 814l8 3M1105 827l7-5" fill="none" stroke="#223" stroke-width="1.200"/><circle cx="1114" cy="821" r="2.500" fill="#2244bb"/>
<rect x="1133" y="814" width="14" height="14" fill="none" stroke="#333"/><rect x="1133" y="814" width="7" height="7" fill="#cdd" stroke="#223"/><path d="M1137 818l8 8" stroke="#224" stroke-width="1.500"/>

<!-- start flag -->
<g transform="translate(11,841) skewY(-6)"><rect x="0" y="9" width="8" height="7" fill="#3a6fdc"/><rect x="9" y="10" width="8" height="7" fill="#f7c400"/><rect x="1" y="1" width="8" height="7" fill="#d84a2a"/><rect x="10" y="2" width="8" height="7" fill="#5cc040"/></g>
<!-- task icons -->
<g fill="#f0cf60" stroke="#9a7a20" stroke-width=".8">
<path d="M116 846h6l2 2h8v11h-16z"/><path d="M116 850h16v9h-16z" fill="#ffe690"/>
<path d="M257 846h6l2 2h8v11h-16z"/><path d="M257 850h16v9h-16z" fill="#ffe690"/>
<path d="M399 846h6l2 2h8v11h-16z"/><path d="M399 850h16v9h-16z" fill="#ffe690"/>
</g>
<rect x="542" y="842" width="14" height="15" fill="#1a68b8"/><text x="545" y="854" font-size="11" fill="#fff">a</text><rect x="543" y="842" width="3" height="3" fill="#fff"/>
<rect x="684" y="841" width="16" height="16" fill="#1060b0"/><circle cx="692" cy="849" r="5" fill="none" stroke="#cfe4ff" stroke-width="2"/>
<rect x="825" y="843" width="15" height="15" rx="2" fill="#f0f0f0" stroke="#999"/><path d="M830 857l8-14 2 2-7 12z" fill="#e0a020"/><path d="M836 846l2-4 2 2z" fill="#3080d0"/>
<!-- tray -->
<path d="M970 857l10-13 3 2-10 13-3-1M970 855c-1-3 2-5 4-3" fill="none" stroke="#222" stroke-width="1.300"/>
<rect x="987" y="842" width="15" height="15" fill="#fff" stroke="#111"/><rect x="987" y="842" width="15" height="3" fill="#2233aa"/><path d="M990 855l7-8" stroke="#333"/>
<rect x="1010" y="843" width="12" height="14" fill="#fff480" stroke="#111"/><text x="1012" y="854" font-size="11" font-weight="bold" fill="#2233aa">?</text>
<path d="M1035 845h6v4h-6zM1038 842h6v4h-3" fill="none" stroke="#111"/><path d="M1035 855h7l-3.500 4z" fill="#111"/>
<circle cx="1060" cy="849" r="9" fill="#b0b4c4" stroke="#fff" stroke-width="2"/><path d="M1062 844l-5 5 5 5" fill="none" stroke="#fff" stroke-width="2"/>
<circle cx="1077" cy="843" r="2.500" fill="#3090e0"/><circle cx="1071" cy="849" r="2.500" fill="#40b040"/><circle cx="1079" cy="849" r="2.500" fill="#3090e0"/><circle cx="1075" cy="855" r="2.500" fill="#40b040"/><circle cx="1083" cy="856" r="4" fill="#d02020"/><path d="M1081 854l4 4M1085 854l-4 4" stroke="#fff"/>
</svg>
</body></html>
